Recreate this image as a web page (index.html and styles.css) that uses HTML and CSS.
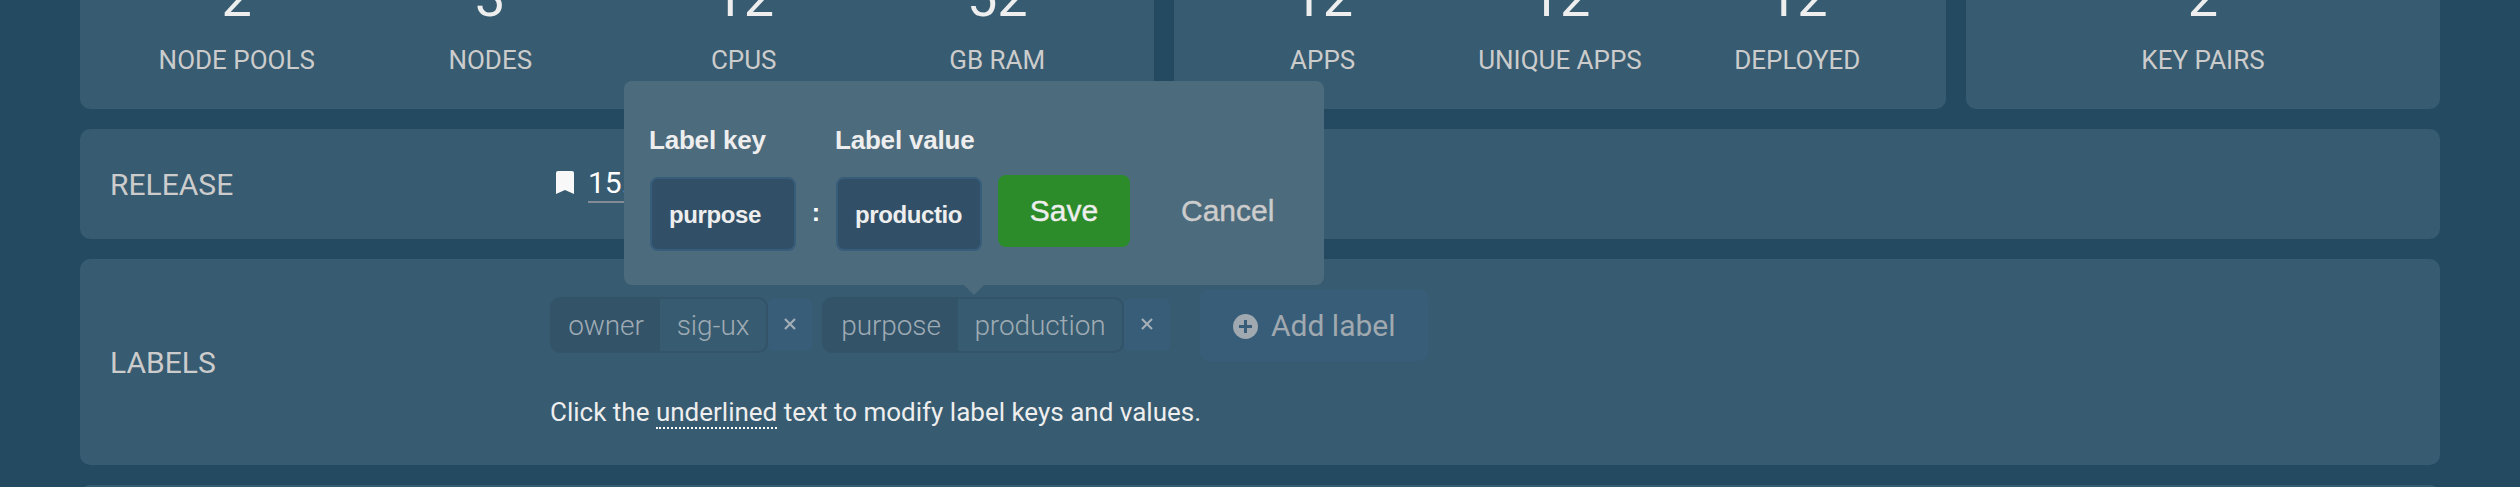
FILE: index.html
```html
<!DOCTYPE html>
<html lang="en">
<head>
<meta charset="utf-8">
<title>Cluster details</title>
<link rel="stylesheet" href="styles.css">
</head>
<body>
<main class="page">
  <div class="stats">
    <section class="card stat-card stat-card--nodes">
      <div class="stat"><span class="stat-value">2</span><span class="stat-label">NODE POOLS</span></div>
      <div class="stat"><span class="stat-value">3</span><span class="stat-label">NODES</span></div>
      <div class="stat"><span class="stat-value">12</span><span class="stat-label">CPUS</span></div>
      <div class="stat"><span class="stat-value">52</span><span class="stat-label">GB RAM</span></div>
    </section>
    <section class="card stat-card stat-card--apps">
      <div class="stat"><span class="stat-value">12</span><span class="stat-label">APPS</span></div>
      <div class="stat"><span class="stat-value">12</span><span class="stat-label">UNIQUE APPS</span></div>
      <div class="stat"><span class="stat-value">12</span><span class="stat-label">DEPLOYED</span></div>
    </section>
    <section class="card stat-card stat-card--keys">
      <div class="stat"><span class="stat-value">2</span><span class="stat-label">KEY PAIRS</span></div>
    </section>
  </div>

  <section class="card row row--release">
    <h2 class="row-title">RELEASE</h2>
    <div class="release">
      <svg class="bookmark" viewBox="0 0 18 23"><path d="M2 0h14a2 2 0 0 1 2 2v21l-9-4-9 4V2a2 2 0 0 1 2-2z"/></svg>
      <span class="version">15.</span>
    </div>
  </section>

  <section class="card row row--labels">
    <h2 class="row-title">LABELS</h2>
    <div class="labels">
      <div class="label-list">
        <div class="label label--owner">
          <div class="chip"><span class="chip-key">owner</span><span class="chip-value">sig-ux</span></div>
          <button class="remove"><svg class="cross" viewBox="0 0 12 12"><path d="M1 1l10 10M11 1L1 11"/></svg></button>
        </div>
        <div class="label label--purpose">
          <div class="chip"><span class="chip-key">purpose</span><span class="chip-value">production</span></div>
          <button class="remove"><svg class="cross" viewBox="0 0 12 12"><path d="M1 1l10 10M11 1L1 11"/></svg></button>
          <form class="popover">
            <label class="field"><span class="field-name">Label key</span><span class="input">purpose</span></label>
            <span class="colon">:</span>
            <label class="field"><span class="field-name">Label value</span><span class="input">productio</span></label>
            <button class="save" type="button">Save</button>
            <button class="cancel" type="button">Cancel</button>
          </form>
        </div>
        <button class="add"><svg class="plus" viewBox="0 0 25 25"><circle cx="12.5" cy="12.5" r="12.5"/><path d="M12.5 6v13M6 12.5h13"/></svg>Add label</button>
      </div>
      <p class="hint">Click the <span class="hint-link">underlined</span> text to modify label keys and values.</p>
    </div>
  </section>

  <section class="card row row--next"></section>
</main>
</body>
</html>
```

FILE: styles.css
```css
* { box-sizing: border-box; }

body {
  margin: 0;
  height: 487px;
  overflow: hidden;
  background: #234a61;
  color: #eee;
  font-family: Roboto, sans-serif;
}

button {
  border: 0;
  padding: 0;
  font: inherit;
  color: inherit;
}

.page {
  display: flex;
  flex-direction: column;
  gap: 20px;
  height: 487px;
  padding: 0 80px;
  overflow: hidden;
}

.card { background: #375b70; border-radius: 10px; flex-shrink: 0; }

.stats { display: flex; gap: 20px; height: 109px; flex-shrink: 0; align-items: flex-end; }
.stat-card { display: flex; height: 160px; padding: 0 30px 34px; align-items: flex-end; }
.stat-card--nodes { width: 1074px; }
.stat-card--apps { width: 772px; }
.stat-card--keys { width: 474px; }
.stat { flex: 1; display: flex; flex-direction: column; align-items: center; }
.stat-value { font-size: 54px; line-height: 60px; margin-bottom: 17px; }
.stat-label { font-size: 26px; line-height: 30px; color: #ccc; }

.row { display: flex; align-items: center; padding-left: 30px; }
.row--release { height: 110px; }
.row--labels { height: 206px; }
.row--next { height: 110px; }
.row-title { width: 440px; margin: 0; padding-top: 2px; font-size: 30px; font-weight: 400; line-height: 36px; color: #ccc; }

.release { display: flex; align-items: center; padding-left: 6px; gap: 14px; margin-bottom: 1px; }
.bookmark { width: 18px; height: 23px; fill: #f8f8f8; margin-bottom: 2px; }
.version { font-size: 30px; line-height: 37px; border-bottom: 2px solid #858b96; color: #fff; }

.labels { display: flex; flex-direction: column; gap: 33px; padding-bottom: 5px; }
.label-list { display: flex; align-items: center; }
.label { position: relative; display: flex; align-items: center; }
.label--owner { width: 262px; margin-right: 10px; }
.label--purpose { width: 348px; margin-right: 30px; }
.chip {
  display: flex;
  height: 56px;
  border: 2px solid #335369;
  border-radius: 10px;
  font-size: 28px;
  font-weight: 300;
  line-height: 53px;
  letter-spacing: -0.1px;
  color: #9fabb4;
  text-align: center;
}
.label--owner .chip { width: 218px; }
.label--purpose .chip { width: 302px; }
.chip-key { background: #335369; border-radius: 7px 0 0 7px; }
.label--owner .chip-key { width: 108px; }
.label--purpose .chip-key { width: 134px; }
.chip-value { flex: 1; }
.remove {
  flex: 1;
  display: flex;
  align-items: center;
  justify-content: center;
  height: 52px;
  border-radius: 5px;
  background: #385d78;
}
.cross { width: 12px; height: 12px; margin-bottom: 2px; fill: none; stroke: #a3aeb6; stroke-width: 2.2; }

.add {
  display: flex;
  align-items: center;
  gap: 13px;
  width: 228px;
  height: 72px;
  padding-left: 33px;
  border-radius: 8px;
  background: #385d78;
  font-size: 30px;
  color: #a0a9af;
}
.plus { width: 25px; height: 25px; fill: #a0a9af; stroke: none; margin-top: 2px; }
.plus path { stroke: #385d78; stroke-width: 3; }

.hint { margin: 0; font-size: 26px; line-height: 36px; color: #eee; }
.hint-link { border-bottom: 2px dotted #fff; }

.popover {
  position: absolute;
  left: -198px;
  bottom: 68px;
  z-index: 1;
  display: flex;
  width: 700px;
  height: 204px;
  padding-left: 26px;
  border-radius: 8px;
  background: #4c6b7c;
  font-family: "Liberation Sans", Arial, sans-serif;
}
.popover::after {
  content: "";
  position: absolute;
  left: 340px;
  top: 100%;
  border: 10px solid transparent;
  border-top-color: #4c6b7c;
  border-bottom: 0;
}
.field { display: flex; flex-direction: column; width: 146px; padding-top: 43px; }
.field-name { font-size: 26px; font-weight: 700; line-height: 32px; margin-bottom: 21px; white-space: nowrap; letter-spacing: -0.2px; text-indent: -1px; }
.input {
  height: 74px;
  padding-left: 17px;
  border: 2px solid #385d7b;
  border-radius: 8px;
  background: #315067;
  font-size: 24px;
  font-weight: 700;
  line-height: 71px;
  letter-spacing: -0.4px;
}
.colon { width: 40px; padding-top: 115px; font-size: 25px; font-weight: 700; line-height: 32px; text-align: center; color: #fff; }
.save, .cancel { height: 72px; margin-top: 94px; font-size: 30px; -webkit-text-stroke: 0.4px currentColor; }
.save { width: 132px; margin-left: 16px; border-radius: 8px; background: #2b8c29; }
.cancel { margin-left: 51px; background: none; color: #ccc; }
```
